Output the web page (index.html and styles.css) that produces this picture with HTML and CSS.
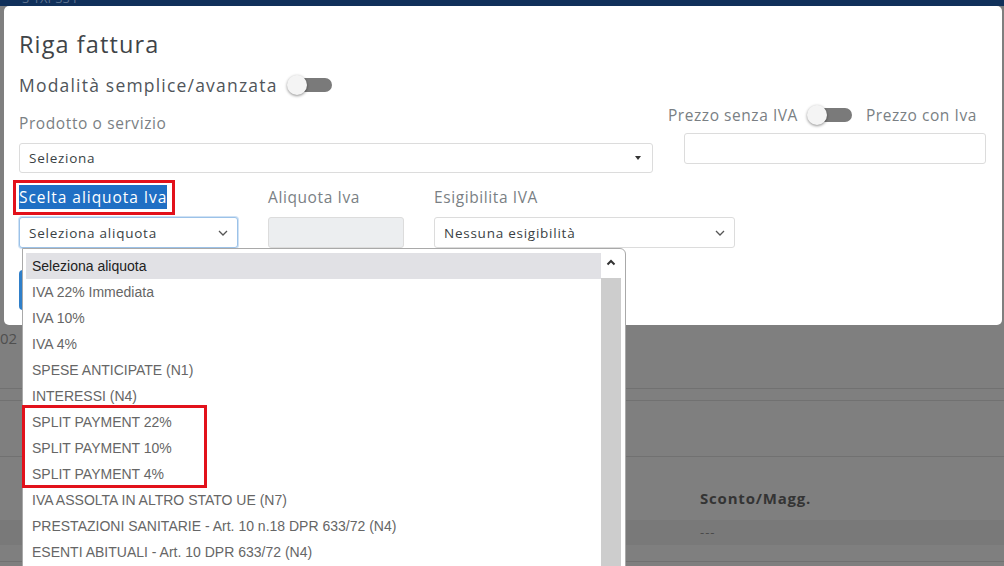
FILE: index.html
```html
<!DOCTYPE html>
<html lang="it">
<head>
    <meta charset="utf-8">
    <link rel="stylesheet" href="styles.css">
</head>
<body>
    <div class="topbar"><span class="topbar-text">S 1XPSS I</span></div>

    <div class="stage">
        <div class="modal">
            <h2 class="modal-title">Riga fattura</h2>

            <div class="mode-row">
                <span>Modalità semplice/avanzata</span>
                <span class="switch"><span class="knob"></span></span>
            </div>

            <div class="row-product">
                <div class="col-product">
                    <div class="label">Prodotto o servizio</div>
                    <div class="select select-s2">
                        <span>Seleziona</span>
                        <span class="s2-caret"></span>
                    </div>
                </div>
                <div class="col-price">
                    <div class="price-toggle">
                        <span>Prezzo senza IVA</span>
                        <span class="switch"><span class="knob"></span></span>
                        <span>Prezzo con Iva</span>
                    </div>
                    <div class="input"></div>
                </div>
            </div>

            <div class="row-iva">
                <div class="col-scelta">
                    <div class="label"><span class="sel-text">Scelta aliquota Iva</span></div>
                    <div class="select focus">
                        <span>Seleziona aliquota</span>
                        <svg class="chev" width="10" height="6" viewBox="0 0 10 6"><path d="M1 1l4 4 4-4" fill="none" stroke="#555" stroke-width="1.3"/></svg>
                    </div>
                </div>
                <div class="col-aliquota">
                    <div class="label">Aliquota Iva</div>
                    <div class="input readonly"></div>
                </div>
                <div class="col-esig">
                    <div class="label">Esigibilita IVA</div>
                    <div class="select">
                        <span>Nessuna esigibilità</span>
                        <svg class="chev" width="10" height="6" viewBox="0 0 10 6"><path d="M1 1l4 4 4-4" fill="none" stroke="#555" stroke-width="1.3"/></svg>
                    </div>
                </div>
            </div>

            <div class="footer">
                <button class="btn-save"></button>
            </div>
        </div>
    </div>

    <div class="behind">
        <div class="behind-date">02</div>
        <div class="line l1"></div>
        <div class="line l2"></div>
        <div class="line l3"></div>
        <div class="behind-head">Sconto/Magg.</div>
        <div class="behind-band">---</div>
        <div class="line"></div>
    </div>

    <div class="listbox">
        <ul class="options">
            <li class="active">Seleziona aliquota</li>
            <li>IVA 22% Immediata</li>
            <li>IVA 10%</li>
            <li>IVA 4%</li>
            <li>SPESE ANTICIPATE (N1)</li>
            <li>INTERESSI (N4)</li>
            <li>SPLIT PAYMENT 22%</li>
            <li>SPLIT PAYMENT 10%</li>
            <li>SPLIT PAYMENT 4%</li>
            <li>IVA ASSOLTA IN ALTRO STATO UE (N7)</li>
            <li>PRESTAZIONI SANITARIE - Art. 10 n.18 DPR 633/72 (N4)</li>
            <li>ESENTI ABITUALI - Art. 10 DPR 633/72 (N4)</li>
        </ul>
        <div class="scrollbar">
            <div class="scroll-up">
                <svg width="10" height="7" viewBox="0 0 10 7"><path d="M1.5 5.5L5 2l3.5 3.5" fill="none" stroke="#333" stroke-width="2"/></svg>
            </div>
            <div class="scroll-track"></div>
        </div>
    </div>

    <div class="mark mark-label"></div>
    <div class="mark mark-split"></div>
</body>
</html>
```

FILE: styles.css
```css
body
{
    margin: 0;
    background: #7f7f7f;
    font-family: "Open Sans", "Liberation Sans", sans-serif;
    overflow: hidden;
    height: 566px;
    position: relative;
}
.topbar
{
    height: 6px;
    background: #10305a;
    overflow: hidden;
    position: relative;
}
.topbar-text
{
    display: block;
    margin-left: 22px;
    margin-top: -9px;
    font-size: 13px;
    line-height: 14px;
    color: #5a6f8c;
}
.stage
{
    padding-left: 4px;
    padding-right: 2px;
}
.modal
{
    background: #fff;
    border-radius: 5px;
    height: 319px;
    box-sizing: border-box;
    padding: 23px 15px 0 15px;
    color: #4a4f54;
}
.modal-title
{
    margin: 0;
    font-weight: 400;
    font-size: 23.5px;
    line-height: 30px;
    letter-spacing: 1.1px;
    color: #3f4448;
}
.mode-row
{
    margin-top: 14px;
    display: flex;
    align-items: center;
    height: 24px;
    font-size: 17.5px;
    letter-spacing: 1.2px;
    color: #50555a;
    gap: 9px;
}
.switch
{
    display: inline-block;
    width: 45px;
    height: 20px;
    position: relative;
    flex-shrink: 0;
}
.switch::before
{
    content: "";
    position: absolute;
    left: 6px;
    right: 0;
    top: 3px;
    height: 14px;
    border-radius: 7px;
    background: #7a7a7a;
}
.knob
{
    position: absolute;
    left: 0;
    top: 0;
    width: 20px;
    height: 20px;
    border-radius: 50%;
    background: #f4f4f4;
    box-shadow: 0 1px 3px rgba(0,0,0,0.45);
}
.row-product
{
    display: flex;
}
.col-product
{
    width: 634px;
    padding-top: 14px;
}
.label
{
    font-size: 15.5px;
    line-height: 24px;
    letter-spacing: 0.6px;
    color: #7a7f84;
}
.select
{
    box-sizing: border-box;
    border: 1px solid #dcdcdc;
    border-radius: 3px;
    height: 31px;
    display: flex;
    align-items: center;
    justify-content: space-between;
    padding: 0 9px;
    font-size: 13.5px;
    letter-spacing: 0.75px;
    color: #3a3f44;
    background: #fff;
}
.col-product .select
{
    margin-top: 8px;
    height: 30px;
}
.s2-caret
{
    width: 0;
    height: 0;
    border-left: 3.5px solid transparent;
    border-right: 3.5px solid transparent;
    border-top: 4px solid #333;
    margin-right: 2px;
}
.col-price
{
    margin-left: 15px;
    width: 318px;
    padding-top: 7px;
}
.price-toggle
{
    display: flex;
    align-items: center;
    height: 22px;
    font-size: 15.5px;
    letter-spacing: 0.55px;
    color: #7a7f84;
    gap: 9px;
}
.price-toggle .switch
{
    margin-right: 5px;
}
.input
{
    box-sizing: border-box;
    margin: 7px 0 0 16px;
    width: 302px;
    height: 31px;
    border: 1px solid #dcdcdc;
    border-radius: 3px;
    background: #fff;
}
.row-iva
{
    display: flex;
    margin-top: 12px;
}
.row-iva .select,
.row-iva .input
{
    margin-top: 8px;
}
.col-scelta
{
    width: 219px;
}
.col-aliquota
{
    width: 136px;
    margin-left: 30px;
}
.col-esig
{
    width: 301px;
    margin-left: 30px;
}
.input.readonly
{
    margin-left: 0;
    width: 136px;
    background: #eceef0;
}
.select.focus
{
    border-color: #9cc2e8;
    box-shadow: 0 0 0 1px #cfe2f5;
}
.sel-text
{
    background: #1f6fc4;
    color: #fff;
    padding: 1px 0;
    letter-spacing: 0.95px;
}
.footer
{
    margin-top: 22px;
}
.btn-save
{
    display: block;
    width: 90px;
    height: 40px;
    border: none;
    border-radius: 4px;
    background: #2f7fc9;
}
.behind
{
    position: relative;
    color: #3a3a3a;
}
.behind-date
{
    font-size: 15px;
    line-height: 16px;
    margin-top: 5px;
    color: #4f4f4f;
}
.line
{
    height: 1px;
    background: #717171;
}
.l1
{
    margin-top: 42px;
}
.l2
{
    margin-top: 11px;
}
.l3
{
    margin-top: 55px;
}
.behind-head
{
    padding-left: 700px;
    margin-top: 31px;
    font-weight: 700;
    font-size: 15px;
    line-height: 20px;
    letter-spacing: 0.8px;
    color: #343434;
}
.behind-band
{
    margin-top: 12px;
    padding-left: 700px;
    height: 25px;
    line-height: 25px;
    background: #797979;
    color: #4a4a4a;
    font-size: 13px;
    letter-spacing: 1px;
    margin-bottom: 16px;
}
.listbox
{
    position: absolute;
    left: 22px;
    top: 248px;
    width: 604px;
    height: 330px;
    box-sizing: border-box;
    background: #fff;
    border: 1px solid #a9a9a9;
    border-radius: 0 6px 0 0;
    padding: 4px 4px 0 3px;
    display: flex;
    font-family: "Liberation Sans", Arial, sans-serif;
}
.options
{
    list-style: none;
    margin: 0;
    padding: 0;
    width: 575px;
}
.options li
{
    height: 26px;
    line-height: 26px;
    padding-left: 6px;
    font-size: 14px;
    color: #666;
    white-space: nowrap;
}
.options li.active
{
    background: #e1e1e5;
    color: #222;
}
.scrollbar
{
    width: 20px;
    display: flex;
    flex-direction: column;
}
.scroll-up
{
    height: 25px;
    display: flex;
    justify-content: center;
    padding-top: 6px;
    box-sizing: border-box;
}
.scroll-track
{
    flex: 1;
    background: #cdcdcd;
}
.mark
{
    position: absolute;
    border: 3px solid #e2111b;
    box-sizing: border-box;
}
.mark-label
{
    left: 13px;
    top: 180px;
    width: 162px;
    height: 35px;
}
.mark-split
{
    left: 22px;
    top: 405px;
    width: 185px;
    height: 83px;
}
```
